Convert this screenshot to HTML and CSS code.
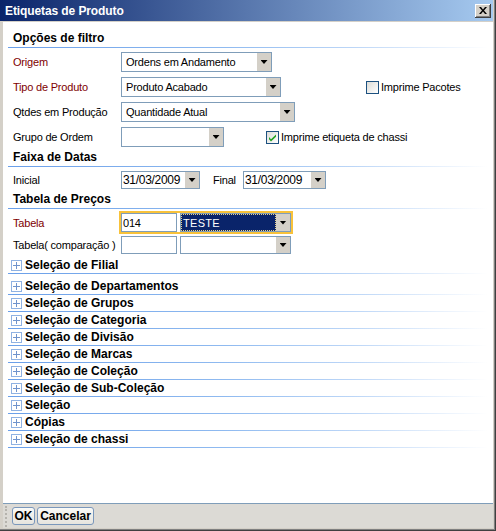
FILE: index.html
```html
<!DOCTYPE html>
<html lang="pt">
<head>
<meta charset="utf-8">
<title>Etiquetas de Produto</title>
<link rel="stylesheet" href="styles.css">
</head>
<body>
<div class="window">
  <div class="titlebar">
    <span class="title">Etiquetas de Produto</span>
    <span class="close"><svg width="8" height="7" viewBox="0 0 8 7"><path d="M0 0h2l2 2.5L6 0h2L5 3.5 8 7H6L4 4.5 2 7H0l3-3.5z" fill="#000"/></svg></span>
  </div>
  <div class="frame">
    <div class="client">
      <div class="sec">Opções de filtro</div>
      <div class="rows first">
        <div class="row">
          <span class="lbl req">Origem</span>
          <div class="combo w-origem"><span class="val">Ordens em Andamento</span><span class="drop"></span></div>
        </div>
        <div class="row">
          <span class="lbl req">Tipo de Produto</span>
          <div class="combo w-tipo"><span class="val">Produto Acabado</span><span class="drop"></span></div>
          <span class="chk chk-pacotes"><span class="box"></span><span>Imprime Pacotes</span></span>
        </div>
        <div class="row">
          <span class="lbl">Qtdes em Produção</span>
          <div class="combo w-qtd"><span class="val">Quantidade Atual</span><span class="drop"></span></div>
        </div>
        <div class="row">
          <span class="lbl">Grupo de Ordem</span>
          <div class="combo w-grupo"><span class="val"></span><span class="drop"></span></div>
          <span class="chk chk-chassi"><span class="box"><svg width="11" height="11" viewBox="0 0 11 11"><path d="M2 5l2 2.2L9 2.5v2.3L4 9.5 2 7.3z" fill="#21a121"/></svg></span><span>Imprime etiqueta de chassi</span></span>
        </div>
      </div>

      <div class="sec sec-gap">Faixa de Datas</div>
      <div class="row date-row">
        <span class="lbl">Inicial</span>
        <div class="combo date w-d1"><span class="val">31/03/2009</span><span class="drop"></span></div>
        <span class="lbl-final">Final</span>
        <div class="combo date w-d2"><span class="val">31/03/2009</span><span class="drop"></span></div>
      </div>

      <div class="sec sec-gap">Tabela de Preços</div>
      <div class="row tab-row">
        <span class="lbl req lbl-tab">Tabela</span>
        <div class="focus">
          <div class="text w-code"><span class="val">014</span></div>
          <div class="combo w-tab"><span class="val sel">TESTE</span><span class="drop"></span></div>
        </div>
      </div>
      <div class="row cmp-row">
        <span class="lbl">Tabela( comparação )</span>
        <div class="text w-code"></div>
        <div class="combo w-tab gap3"><span class="val"></span><span class="drop"></span></div>
      </div>

      <ul class="groups">
        <li class="grp grp-first"><span class="plus"></span>Seleção de Filial</li>
        <li class="grp"><span class="plus"></span>Seleção de Departamentos</li>
        <li class="grp"><span class="plus"></span>Seleção de Grupos</li>
        <li class="grp"><span class="plus"></span>Seleção de Categoria</li>
        <li class="grp"><span class="plus"></span>Seleção de Divisão</li>
        <li class="grp"><span class="plus"></span>Seleção de Marcas</li>
        <li class="grp"><span class="plus"></span>Seleção de Coleção</li>
        <li class="grp"><span class="plus"></span>Seleção de Sub-Coleção</li>
        <li class="grp"><span class="plus"></span>Seleção</li>
        <li class="grp"><span class="plus"></span>Cópias</li>
        <li class="grp"><span class="plus"></span>Seleção de chassi</li>
      </ul>
    </div>
    <div class="footer">
      <span class="grip"></span>
      <span class="btn btn-ok">OK</span>
      <span class="btn btn-cancel">Cancelar</span>
    </div>
  </div>
</div>
</body>
</html>
```
FILE: styles.css
```css
* { box-sizing: border-box; }
html, body { margin: 0; padding: 0; }
body {
  width: 496px;
  height: 531px;
  overflow: hidden;
  background: #d4d0c8;
  font-family: "Liberation Sans", Arial, sans-serif;
  font-size: 11px;
  color: #000;
}
.window {
  width: 496px;
  height: 531px;
  display: flex;
  flex-direction: column;
  background: #d4d0c8;
  padding: 0 3px 3px 0;
  box-shadow: inset -1px -1px #404040, inset -2px -2px #808080;
}
.titlebar {
  height: 21px;
  flex: none;
  display: flex;
  align-items: center;
  padding: 0 2px 0 5px;
  background: linear-gradient(to right, #0a246a, #a6caf0);
}
.title {
  flex: 1;
  color: #fff;
  font-weight: bold;
  font-size: 12px;
  letter-spacing: -0.1px;
}
.close {
  width: 16px;
  height: 14px;
  display: flex;
  align-items: center;
  justify-content: center;
  background: #d4d0c8;
  box-shadow: inset -1px -1px #404040, inset 1px 1px #fff, inset -2px -2px #808080;
}
.frame {
  flex: 1;
  display: flex;
  flex-direction: column;
  padding: 1px 0 0 3px;
}
.client {
  flex: 1;
  background: #fff;
  padding: 8px 5px 0 5px;
}
.sec {
  font-weight: bold;
  font-size: 12px;
  line-height: 16px;
  height: 18px;
  padding: 0 0 2px 5px;
  background: linear-gradient(to right, #6a9fe9 0%, #8fbaf0 45%, #bcd6f7 72%, #ffffff 100%) left bottom / 100% 1px no-repeat;
}
.sec-gap { margin-top: 2px; }
.rows.first { margin-top: 4px; display: flex; flex-direction: column; gap: 5px; }
.row {
  display: flex;
  align-items: center;
  height: 20px;
  padding-left: 5px;
  letter-spacing: -0.2px;
}
.lbl { width: 108px; flex: none; white-space: nowrap; }
.req { color: #800000; }
.combo, .text {
  display: flex;
  height: 100%;
  border: 1px solid #7f9db9;
  background: #fff;
  flex: none;
}
.val {
  flex: 1;
  display: flex;
  align-items: center;
  padding-left: 4px;
  white-space: nowrap;
  overflow: hidden;
}
.drop {
  width: 14px;
  flex: none;
  background: #d4d0c8;
  display: flex;
  align-items: center;
  justify-content: center;
}
.drop::after {
  content: "";
  width: 7px;
  height: 4px;
  background: #000;
  clip-path: polygon(0 0, 100% 0, 50% 100%);
}
.w-origem { width: 151px; }
.w-tipo { width: 160px; }
.w-qtd { width: 174px; }
.w-grupo { width: 103px; }
.chk { display: flex; align-items: center; gap: 2px; white-space: nowrap; }
.chk .box {
  width: 13px;
  height: 13px;
  border: 1px solid #1c5180;
  background: linear-gradient(135deg, #dcdcd7, #ffffff);
  display: flex;
  align-items: center;
  justify-content: center;
}
.chk-pacotes { margin-left: 85px; }
.chk-chassi { margin-left: 42px; }

.date-row { margin-top: 4px; height: 18px; }
.date .val { padding-left: 1px; font-size: 12px; letter-spacing: -0.3px; }
.w-d1 { width: 79px; }
.w-d2 { width: 83px; }
.lbl-final { margin-left: 13px; width: 30px; }

.tab-row { margin-top: 2px; height: 23px; }
.lbl-tab { width: 106px; }
.focus {
  display: flex;
  gap: 3px;
  height: 23px;
  border: 2px solid #f8c23a;
}
.w-code { width: 56px; }
.w-code .val { padding-left: 1px; }
.w-tab { width: 111px; }
.gap3 { margin-left: 3px; }
.val.sel {
  background: #0a246a;
  color: #fff;
  padding-left: 2px;
  letter-spacing: 0.3px;
  outline: 1px dotted #e8d28a;
  outline-offset: -1px;
}
.cmp-row { margin-top: 2px; height: 18px; }

.groups {
  list-style: none;
  margin: 3px 0 0 0;
  padding: 0;
}
.grp {
  height: 17px;
  line-height: 16px;
  padding: 0 0 1px 3px;
  display: flex;
  align-items: center;
  gap: 3px;
  font-weight: bold;
  font-size: 12px;
  white-space: nowrap;
  background: linear-gradient(to right, #6a9fe9 0%, #8fbaf0 45%, #bcd6f7 72%, #ffffff 100%) left bottom / 100% 1px no-repeat;
}
.grp-first { margin-bottom: 4px; }
.plus {
  width: 11px;
  height: 11px;
  flex: none;
  border: 1px solid #8fb2e3;
  background:
    linear-gradient(#6f93cc, #6f93cc) center / 7px 1px no-repeat,
    linear-gradient(#6f93cc, #6f93cc) center / 1px 7px no-repeat,
    #fff;
}

.footer {
  height: 25px;
  flex: none;
  border-top: 1px solid #7f9db9;
  background: #dcdad5;
  display: flex;
  align-items: center;
  padding-left: 2px;
}
.grip {
  width: 3px;
  height: 21px;
  border-left: 2px dotted #b5b3ad;
  margin-right: 4px;
}
.btn {
  height: 18px;
  display: flex;
  align-items: center;
  justify-content: center;
  font-weight: bold;
  font-size: 12px;
  border: 1px solid #7a97bb;
  border-radius: 3px;
  background: linear-gradient(#fafaf7, #e6e4de);
}
.btn-ok { width: 23px; }
.btn-cancel { width: 57px; margin-left: 2px; }
```
